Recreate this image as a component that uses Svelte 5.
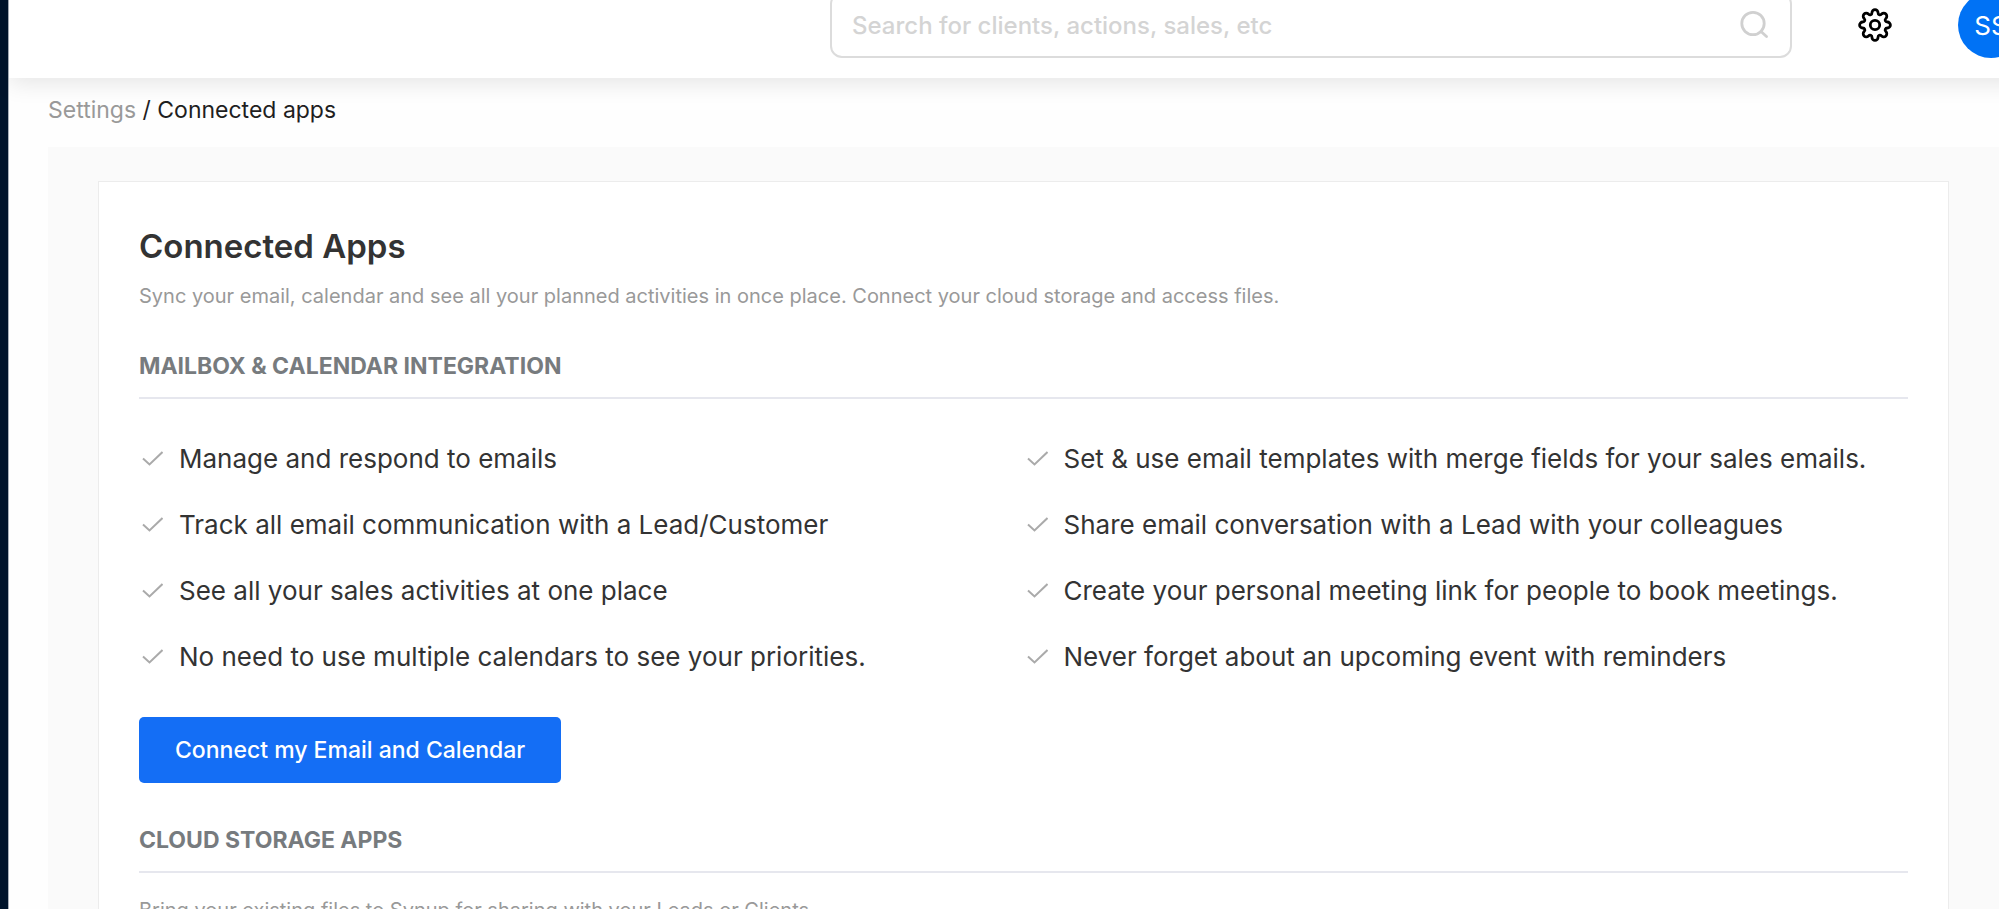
<script lang="ts">
    const mailFeatures: string[] = [
        "Manage and respond to emails",
        "Set & use email templates with merge fields for your sales emails.",
        "Track all email communication with a Lead/Customer",
        "Share email conversation with a Lead with your colleagues",
        "See all your sales activities at one place",
        "Create your personal meeting link for people to book meetings.",
        "No need to use multiple calendars to see your priorities.",
        "Never forget about an upcoming event with reminders",
    ];

    let query = $state("");
</script>

<div class="app">
    <aside class="sidebar"></aside>

    <div class="content">
        <header class="topbar">
            <label class="search">
                <input
                    type="text"
                    aria-label="Search"
                    placeholder="Search for clients, actions, sales, etc"
                    bind:value={query}
                />
                <svg width="30" height="30" viewBox="0 0 30 30" aria-hidden="true">
                    <circle cx="15" cy="13.5" r="11.2" />
                    <path d="M23 21.500l5.500 5" />
                </svg>
            </label>

            <button class="icon-button" aria-label="Settings">
                <svg width="34" height="34" viewBox="0 0 34 34" aria-hidden="true">
                    <circle cx="17" cy="17" r="4.7" />
                    <path
                        d="M14 4.6a3 3 0 0 1 6 0c0 2.2 2 3 3.6 1.5a3 3 0 0 1 4.3 4.3C26.400 12 27.200 14 29.400 14a3 3 0 0 1 0 6c-2.200 0-3 2-1.500 3.600a3 3 0 0 1-4.300 4.300C22 26.400 20 27.200 20 29.400a3 3 0 0 1-6 0c0-2.200-2-3-3.600-1.500a3 3 0 0 1-4.300-4.300C7.600 22 6.800 20 4.600 20a3 3 0 0 1 0-6c2.200 0 3-2 1.500-3.600a3 3 0 0 1 4.300-4.300C12 7.600 14 6.800 14 4.600z"
                    />
                </svg>
            </button>

            <button class="avatar" aria-label="Account">SS</button>
        </header>

        <nav class="breadcrumb" aria-label="Breadcrumb">
            <a href="#settings">Settings</a> / <span>Connected apps</span>
        </nav>

        <main class="panel">
            <div class="card">
                <h1>Connected Apps</h1>
                <p class="hint">
                    Sync your email, calendar and see all your planned activities in once
                    place. Connect your cloud storage and access files.
                </p>

                <section>
                    <h2>Mailbox & Calendar Integration</h2>
                    <ul class="features">
                        {#each mailFeatures as feature}
                            <li>
                                <svg width="24" height="24" viewBox="0 0 24 24" aria-hidden="true">
                                    <path d="M4 12.500l6.500 6L23.500 6" />
                                </svg>
                                {feature}
                            </li>
                        {/each}
                    </ul>
                    <button class="connect">Connect my Email and Calendar</button>
                </section>

                <section>
                    <h2>Cloud Storage Apps</h2>
                    <p class="hint">
                        Bring your existing files to Synup for sharing with your Leads or Clients.
                    </p>
                </section>
            </div>
        </main>
    </div>
</div>

<style>
    :global(body) {
        background: #fefefe;
    }

    .app {
        display: flex;
        height: 100vh;
        overflow: hidden;
        font-family: Inter, "Liberation Sans", sans-serif;
        color: #333;
    }

    .sidebar {
        flex: none;
        width: 8px;
        background: #00142b;
        border-right: 1px solid #a9b1ba;
    }

    .content {
        flex: 1;
        min-width: 0;
        display: flex;
        flex-direction: column;
    }

    .topbar {
        flex: none;
        display: flex;
        align-items: center;
        justify-content: flex-end;
        gap: 66px;
        height: 106px;
        margin-top: -28px;
        margin-right: -25px;
        background: #fff;
        box-shadow: 0 5px 22px rgba(0, 0, 0, 0.1);
    }

    .search {
        box-sizing: border-box;
        flex: 0 1 962px;
        display: flex;
        align-items: center;
        height: 66px;
        padding: 0 22px 0 20px;
        border: 2px solid #dcdcdc;
        border-radius: 12px;
    }

    .search input {
        flex: 1;
        min-width: 0;
        padding: 0;
        border: none;
        outline: none;
        background: none;
        font: inherit;
        font-size: 24px;
        font-weight: 500;
    }

    .search input::placeholder {
        color: #d4d4d4;
        opacity: 1;
    }

    .search svg {
        fill: none;
        stroke: #d0d0d0;
        stroke-width: 2.8;
        stroke-linecap: round;
    }

    .icon-button {
        display: flex;
        padding: 0;
        border: none;
        background: none;
        cursor: pointer;
    }

    .icon-button svg {
        fill: none;
        stroke: #000;
        stroke-width: 2.8;
    }

    .avatar {
        flex: none;
        width: 66px;
        height: 66px;
        padding: 0;
        border: none;
        border-radius: 50%;
        background: #0072f5;
        color: #fff;
        font: inherit;
        font-size: 26px;
        cursor: pointer;
    }

    .breadcrumb {
        flex: none;
        padding: 16px 39px 21px;
        font-size: 23px;
        line-height: 32px;
        color: #1f1f1f;
    }

    .breadcrumb a {
        color: #999;
        text-decoration: none;
    }

    .panel {
        flex: 1 0 auto;
        margin-left: 39px;
        padding: 34px 50px 0;
        background: #fafafa;
    }

    .card {
        padding: 40px;
        border: 1px solid #ececec;
        background: #fff;
    }

    h1 {
        margin: 0;
        font-size: 33px;
        font-weight: 600;
        line-height: 48px;
    }

    .hint {
        margin: 10px 0 0;
        font-size: 20px;
        line-height: 32px;
        color: #999;
    }

    h2 {
        margin: 36px 0 0;
        padding-bottom: 13px;
        border-bottom: 2px solid #e6e7ee;
        font-size: 23px;
        font-weight: 700;
        line-height: 36px;
        text-transform: uppercase;
        color: #777b7e;
    }

    h2 + .hint {
        margin-top: 21px;
    }

    .features {
        display: grid;
        grid-template-columns: 1fr 1fr;
        margin: 26px 0 28px;
        padding: 0;
        list-style: none;
    }

    .features li {
        display: flex;
        align-items: center;
        gap: 16px;
        height: 66px;
        font-size: 26px;
    }

    .features svg {
        flex: none;
        fill: none;
        stroke: #aaa;
        stroke-width: 2;
    }

    .connect {
        margin-bottom: 3px;
        padding: 0 36px;
        border: none;
        border-radius: 5px;
        background: #146ef5;
        color: #fff;
        font: inherit;
        font-size: 23px;
        font-weight: 500;
        line-height: 66px;
        cursor: pointer;
    }
</style>
